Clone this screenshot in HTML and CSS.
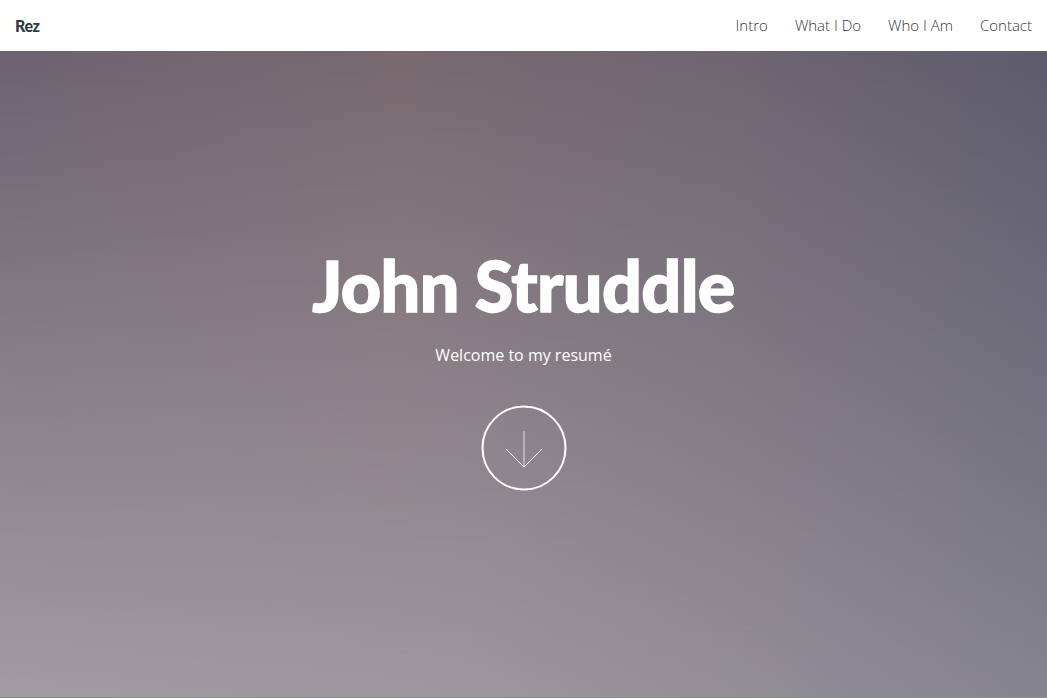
FILE: index.html
```html
<!DOCTYPE html>
<html lang="en">
<head>
<meta charset="utf-8">
<title>Rez</title>
<link rel="stylesheet" href="styles.css">
</head>
<body>
<header class="topbar">
  <a class="logo" href="#">Rez</a>
  <nav class="menu">
    <a href="#intro">Intro</a>
    <a href="#what">What I Do</a>
    <a href="#who">Who I Am</a>
    <a href="#contact">Contact</a>
  </nav>
</header>
<section class="hero" id="intro">
  <div class="hero-inner">
    <h1 class="title">John Struddle</h1>
    <p class="subtitle">Welcome to my resumé</p>
    <a class="down" href="#what" aria-label="Scroll down">
      <svg width="86" height="86" viewBox="0 0 86 86">
        <circle cx="43" cy="43" r="41.5" fill="none" stroke="#fff" stroke-width="2"/>
        <line x1="43" y1="26" x2="43" y2="62" stroke="#d8d4d8" stroke-width="1.2"/>
        <polyline points="25,44 43,62 61,44" fill="none" stroke="#fff" stroke-width="1"/>
      </svg>
    </a>
  </div>
</section>
<div class="after"></div>
</body>
</html>
```
FILE: styles.css
```css
html, body {
  margin: 0;
  padding: 0;
  background: #fff;
}
body {
  font-family: "Open Sans", "Liberation Sans", sans-serif;
}
.topbar {
  height: 51px;
  display: flex;
  align-items: center;
  justify-content: space-between;
  padding: 0 15px 1px 15px;
  box-sizing: border-box;
  background: #fff;
}
.logo {
  font-family: Lato, "Liberation Sans", sans-serif;
  font-weight: 900;
  font-size: 16px;
  color: #2f3a44;
  text-decoration: none;
  letter-spacing: -0.4px;
}
.menu {
  display: flex;
  gap: 27px;
}
.menu a {
  font-family: "Open Sans", "Liberation Sans", sans-serif;
  font-weight: 300;
  font-size: 15px;
  color: #32373d;
  text-decoration: none;
}
.hero {
  position: relative;
  height: 646px;
  background: linear-gradient(to right, #a39ca3 0%, #9f979f 45%, #868490 100%);
  border-bottom: 1px solid #8c8a8e;
  display: flex;
  justify-content: center;
}
.hero::before {
  content: "";
  position: absolute;
  inset: 0;
  background: linear-gradient(to right, #6c6270 0%, #78696f 38%, #6e6570 70%, #5d5b6c 100%);
  -webkit-mask-image: linear-gradient(to bottom, #000 0%, rgba(0,0,0,0) 100%);
  mask-image: linear-gradient(to bottom, #000 0%, rgba(0,0,0,0) 100%);
}
.hero-inner {
  position: relative;
  display: flex;
  flex-direction: column;
  align-items: center;
  padding-top: 192px;
}
.title {
  margin: 0;
  font-family: Lato, "Liberation Sans", sans-serif;
  font-weight: 900;
  font-size: 70px;
  line-height: 84px;
  letter-spacing: -0.6px;
  color: #fff;
  -webkit-text-stroke: 1.4px #fff;
}
.subtitle {
  margin: 17px 0 0 0;
  font-family: "Open Sans", "Liberation Sans", sans-serif;
  font-size: 16px;
  line-height: 22px;
  color: #fff;
}
.down {
  display: block;
  margin-top: 39px;
  width: 86px;
  height: 86px;
}
.down svg {
  display: block;
}
.after {
  height: 2px;
  background: #fff;
}
```
